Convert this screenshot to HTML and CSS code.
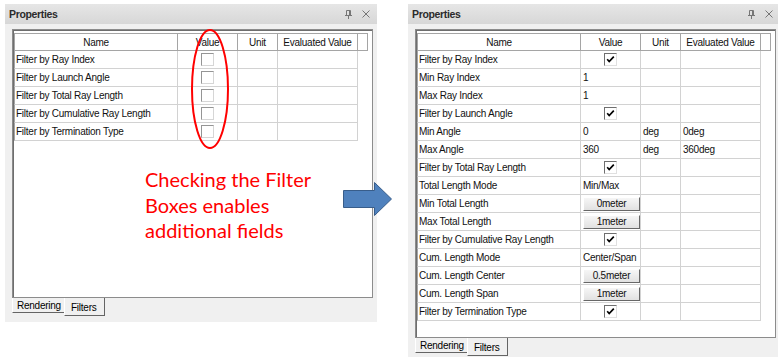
FILE: index.html
```html
<!DOCTYPE html>
<html lang="en">
<head>
  <meta charset="UTF-8">
  <title>Properties - Filters</title>
  <link rel="stylesheet" href="styles.css">
</head>
<body>
<div class="stage">

  <!-- before: filters unchecked -->
  <div class="panel panel-before">
    <div class="titlebar">
      <span class="title">Properties</span>
      <span class="tools">
        <svg width="7" height="9" viewBox="0 0 7 9"><path d="M1.5 .5h4v5h-4z M4.5 .5v5 M0 5.5h7 M3.5 5.5V9" fill="none" stroke="#767676"/></svg>
        <svg width="8" height="8" viewBox="0 0 8 8"><path d="M.5 .5l7 7M7.5 .5l-7 7" stroke="#767676"/></svg>
      </span>
    </div>
    <div class="pane">
      <div class="sheet">
        <table class="grid">
          <colgroup><col class="c-name"><col class="c-value"><col class="c-unit"><col class="c-eval"><col class="c-gap"></colgroup>
          <tr><th>Name</th><th>Value</th><th>Unit</th><th>Evaluated Value</th><th></th></tr>
          <tr><td>Filter by Ray Index</td><td class="box"><span class="check off"></span></td><td></td><td></td><td class="gap"></td></tr>
          <tr><td>Filter by Launch Angle</td><td class="box"><span class="check off"></span></td><td></td><td></td><td class="gap"></td></tr>
          <tr><td>Filter by Total Ray Length</td><td class="box"><span class="check off"></span></td><td></td><td></td><td class="gap"></td></tr>
          <tr><td>Filter by Cumulative Ray Length</td><td class="box"><span class="check off"></span></td><td></td><td></td><td class="gap"></td></tr>
          <tr><td>Filter by Termination Type</td><td class="box"><span class="check off"></span></td><td></td><td></td><td class="gap"></td></tr>
        </table>
      </div>
    </div>
    <div class="tabs">
      <span class="tab tab-rendering">Rendering</span>
      <span class="tab tab-filters">Filters</span>
    </div>
  </div>

  <!-- after: filters checked -->
  <div class="panel panel-after">
    <div class="titlebar">
      <span class="title">Properties</span>
      <span class="tools">
        <svg width="7" height="9" viewBox="0 0 7 9"><path d="M1.5 .5h4v5h-4z M4.5 .5v5 M0 5.5h7 M3.5 5.5V9" fill="none" stroke="#767676"/></svg>
        <svg width="8" height="8" viewBox="0 0 8 8"><path d="M.5 .5l7 7M7.5 .5l-7 7" stroke="#767676"/></svg>
      </span>
    </div>
    <div class="pane">
      <div class="sheet">
        <table class="grid">
          <colgroup><col class="c-name"><col class="c-value"><col class="c-unit"><col class="c-eval"><col class="c-gap"></colgroup>
          <tr><th>Name</th><th>Value</th><th>Unit</th><th>Evaluated Value</th><th></th></tr>
          <tr><td>Filter by Ray Index</td><td class="box"><span class="check"><svg width="11" height="11" viewBox="0 0 11 11"><path d="M2.2 5.3l2 2.2 4.6-4.8" fill="none" stroke="#000" stroke-width="1.7"/></svg></span></td><td></td><td></td><td class="gap"></td></tr>
          <tr><td>Min Ray Index</td><td>1</td><td></td><td></td><td class="gap"></td></tr>
          <tr><td>Max Ray Index</td><td>1</td><td></td><td></td><td class="gap"></td></tr>
          <tr><td>Filter by Launch Angle</td><td class="box"><span class="check"><svg width="11" height="11" viewBox="0 0 11 11"><path d="M2.2 5.3l2 2.2 4.6-4.8" fill="none" stroke="#000" stroke-width="1.7"/></svg></span></td><td></td><td></td><td class="gap"></td></tr>
          <tr><td>Min Angle</td><td>0</td><td>deg</td><td>0deg</td><td class="gap"></td></tr>
          <tr><td>Max Angle</td><td>360</td><td>deg</td><td>360deg</td><td class="gap"></td></tr>
          <tr><td>Filter by Total Ray Length</td><td class="box"><span class="check"><svg width="11" height="11" viewBox="0 0 11 11"><path d="M2.2 5.3l2 2.2 4.6-4.8" fill="none" stroke="#000" stroke-width="1.7"/></svg></span></td><td></td><td></td><td class="gap"></td></tr>
          <tr><td>Total Length Mode</td><td>Min/Max</td><td></td><td></td><td class="gap"></td></tr>
          <tr><td>Min Total Length</td><td><span class="btn">0meter</span></td><td></td><td></td><td class="gap"></td></tr>
          <tr><td>Max Total Length</td><td><span class="btn">1meter</span></td><td></td><td></td><td class="gap"></td></tr>
          <tr><td>Filter by Cumulative Ray Length</td><td class="box"><span class="check"><svg width="11" height="11" viewBox="0 0 11 11"><path d="M2.2 5.3l2 2.2 4.6-4.8" fill="none" stroke="#000" stroke-width="1.7"/></svg></span></td><td></td><td></td><td class="gap"></td></tr>
          <tr><td>Cum. Length Mode</td><td>Center/Span</td><td></td><td></td><td class="gap"></td></tr>
          <tr><td>Cum. Length Center</td><td><span class="btn">0.5meter</span></td><td></td><td></td><td class="gap"></td></tr>
          <tr><td>Cum. Length Span</td><td><span class="btn">1meter</span></td><td></td><td></td><td class="gap"></td></tr>
          <tr><td>Filter by Termination Type</td><td class="box"><span class="check"><svg width="11" height="11" viewBox="0 0 11 11"><path d="M2.2 5.3l2 2.2 4.6-4.8" fill="none" stroke="#000" stroke-width="1.7"/></svg></span></td><td></td><td></td><td class="gap"></td></tr>
        </table>
      </div>
    </div>
    <div class="tabs">
      <span class="tab tab-rendering">Rendering</span>
      <span class="tab tab-filters">Filters</span>
    </div>
  </div>

  <!-- callouts -->
  <svg class="ring" width="40" height="124" viewBox="0 0 40 124">
    <ellipse cx="20" cy="62" rx="18" ry="59" fill="none" stroke="#f00" stroke-width="2"/>
  </svg>
  <p class="note">Checking the Filter<br>Boxes enables<br>additional fields</p>
  <svg class="arrow" width="50" height="34" viewBox="0 0 50 34">
    <path d="M.5 8.5h31v-8l17 16.5-17 16.5v-8h-31z" fill="#4f81bd" stroke="#385d8a"/>
  </svg>

</div>
</body>
</html>
```

FILE: styles.css
```css
* {
    box-sizing: border-box;
}

body {
    margin: 0;
    background: #fff;
    font-family: "Liberation Sans", Arial, sans-serif;
    overflow: hidden;
}

.stage {
    position: relative;
    display: flex;
    align-items: flex-start;
    gap: 31px;
    padding: 4px 0 0 5px;
    width: 778px;
    height: 364px;
}

/* panel */
.panel {
    flex: none;
    width: 372px;
    display: flex;
    flex-direction: column;
    background: #f0f0f0;
}

.panel-before {
    height: 318px;
}

.panel-after {
    height: 353px;
}

.titlebar {
    height: 20px;
    display: flex;
    align-items: center;
    justify-content: space-between;
    padding: 0 7px 0 4px;
    background: linear-gradient(#e6e6e6, #d7d7d7);
}

.title {
    font-size: 10.5px;
    font-weight: bold;
    letter-spacing: -0.35px;
    color: #2b2b2b;
}

.tools {
    display: flex;
    align-items: center;
    gap: 10px;
}

.tools svg {
    display: block;
}

.pane {
    padding: 5px 4px 0 7px;
}

.sheet {
    background: #fff;
    border: 1px solid #8c8c8c;
    box-shadow: inset 1px 1px 0 #6e6e6e;
    padding: 3px 0 0 1px;
}

.panel-before .sheet {
    height: 269px;
}

.panel-after .sheet {
    height: 309px;
}

/* property grid */
.grid {
    border-collapse: separate;
    border-spacing: 0;
    table-layout: fixed;
    width: 354px;
    font-size: 10px;
    letter-spacing: -0.25px;
    color: #111;
}

.c-name { width: 164px; }
.c-value { width: 60px; }
.c-unit { width: 40px; }
.c-eval { width: 80px; }
.c-gap { width: 10px; }

.grid tr {
    height: 18px;
}

.grid th {
    font-weight: normal;
    background: #fff;
    border: 1px solid #a5a5a5;
    border-left: none;
    padding: 0;
    text-align: center;
}

.grid th:first-child {
    border-left: 1px solid #a5a5a5;
}

.grid td {
    border-right: 1px solid #d2d2d2;
    border-bottom: 1px solid #d2d2d2;
    padding: 0 2px;
    white-space: nowrap;
    overflow: hidden;
}

.grid td:first-child {
    border-left: 1px solid #a5a5a5;
    padding-left: 1px;
}

.grid td.gap {
    border: none;
}

.grid td.box {
    text-align: center;
    padding: 0;
}

.check {
    display: inline-block;
    width: 13px;
    height: 13px;
    vertical-align: middle;
    background: #fff;
    border: 1px solid;
    border-color: #6f6f6f #e0e0e0 #e0e0e0 #6f6f6f;
}

.check.off {
    border-color: #959595 #d6d6d6 #d6d6d6 #959595;
}

.check svg {
    display: block;
}

.btn {
    display: block;
    width: 57px;
    height: 14px;
    line-height: 12px;
    text-align: center;
    background: linear-gradient(#f6f6f6, #e1e1e1);
    border: 1px solid;
    border-color: #fff #676767 #676767 #fff;
}

/* bottom tabs */
.tabs {
    display: flex;
    align-items: flex-start;
    padding-left: 7px;
}

.tab {
    font-size: 10px;
    letter-spacing: -0.25px;
    color: #000;
    padding: 2px 0 0 4px;
    border-left: 1px solid #fff;
    border-bottom: 1px solid #646464;
}

.tab-rendering {
    width: 52px;
    height: 15px;
}

.tab-filters {
    width: 41px;
    height: 18px;
    padding-top: 4px;
    padding-left: 6px;
    border-right: 1px solid #646464;
}

/* callouts */
.ring {
    position: absolute;
    left: 190px;
    top: 27px;
}

.note {
    position: absolute;
    left: 145px;
    top: 167px;
    margin: 0;
    font-family: Lato, "Open Sans", sans-serif;
    font-size: 20px;
    line-height: 25.5px;
    color: #ff0000;
}

.arrow {
    position: absolute;
    left: 343px;
    top: 182px;
}
```
